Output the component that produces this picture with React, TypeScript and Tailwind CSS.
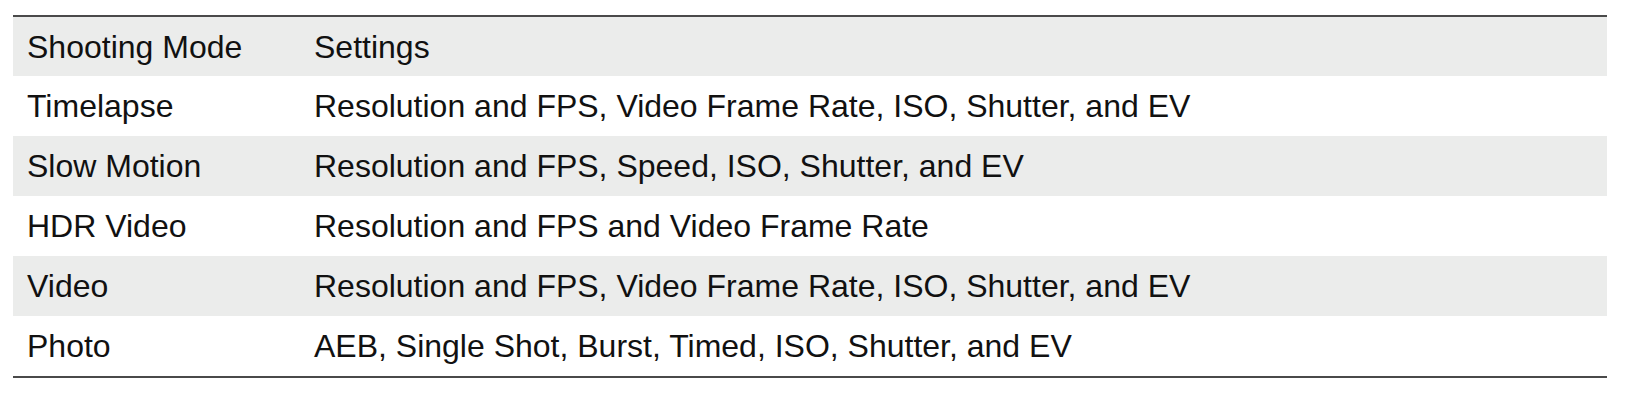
const rows = [
  { mode: 'Timelapse', settings: 'Resolution and FPS, Video Frame Rate, ISO, Shutter, and EV' },
  { mode: 'Slow Motion', settings: 'Resolution and FPS, Speed, ISO, Shutter, and EV' },
  { mode: 'HDR Video', settings: 'Resolution and FPS and Video Frame Rate' },
  { mode: 'Video', settings: 'Resolution and FPS, Video Frame Rate, ISO, Shutter, and EV' },
  { mode: 'Photo', settings: 'AEB, Single Shot, Burst, Timed, ISO, Shutter, and EV' },
]

export default function App() {
  return (
    <div
      className="w-[1627px] h-[406px] bg-white pt-[15px] pl-[13px]"
      style={{ fontFamily: '"Liberation Sans", Arial, sans-serif' }}
    >
      <table className="w-[1594px] border-collapse text-[#111] text-[32px]">
        <thead>
          <tr className="bg-[#ebeceb] border-t-2 border-[#4a4a4a] h-[60px]">
            <th className="w-[287px] px-[14px] text-left font-normal">Shooting Mode</th>
            <th className="px-[14px] text-left font-normal">Settings</th>
          </tr>
        </thead>
        <tbody>
          {rows.map((r, i) => (
            <tr
              key={r.mode}
              className={
                (i % 2 === 1 ? 'bg-[#ebeceb] ' : 'bg-white ') +
                (i === rows.length - 1 ? 'border-b-2 border-[#4a4a4a] h-[61px]' : 'h-[60px]')
              }
            >
              <td className="px-[14px]">{r.mode}</td>
              <td className="px-[14px]">{r.settings}</td>
            </tr>
          ))}
        </tbody>
      </table>
    </div>
  )
}
